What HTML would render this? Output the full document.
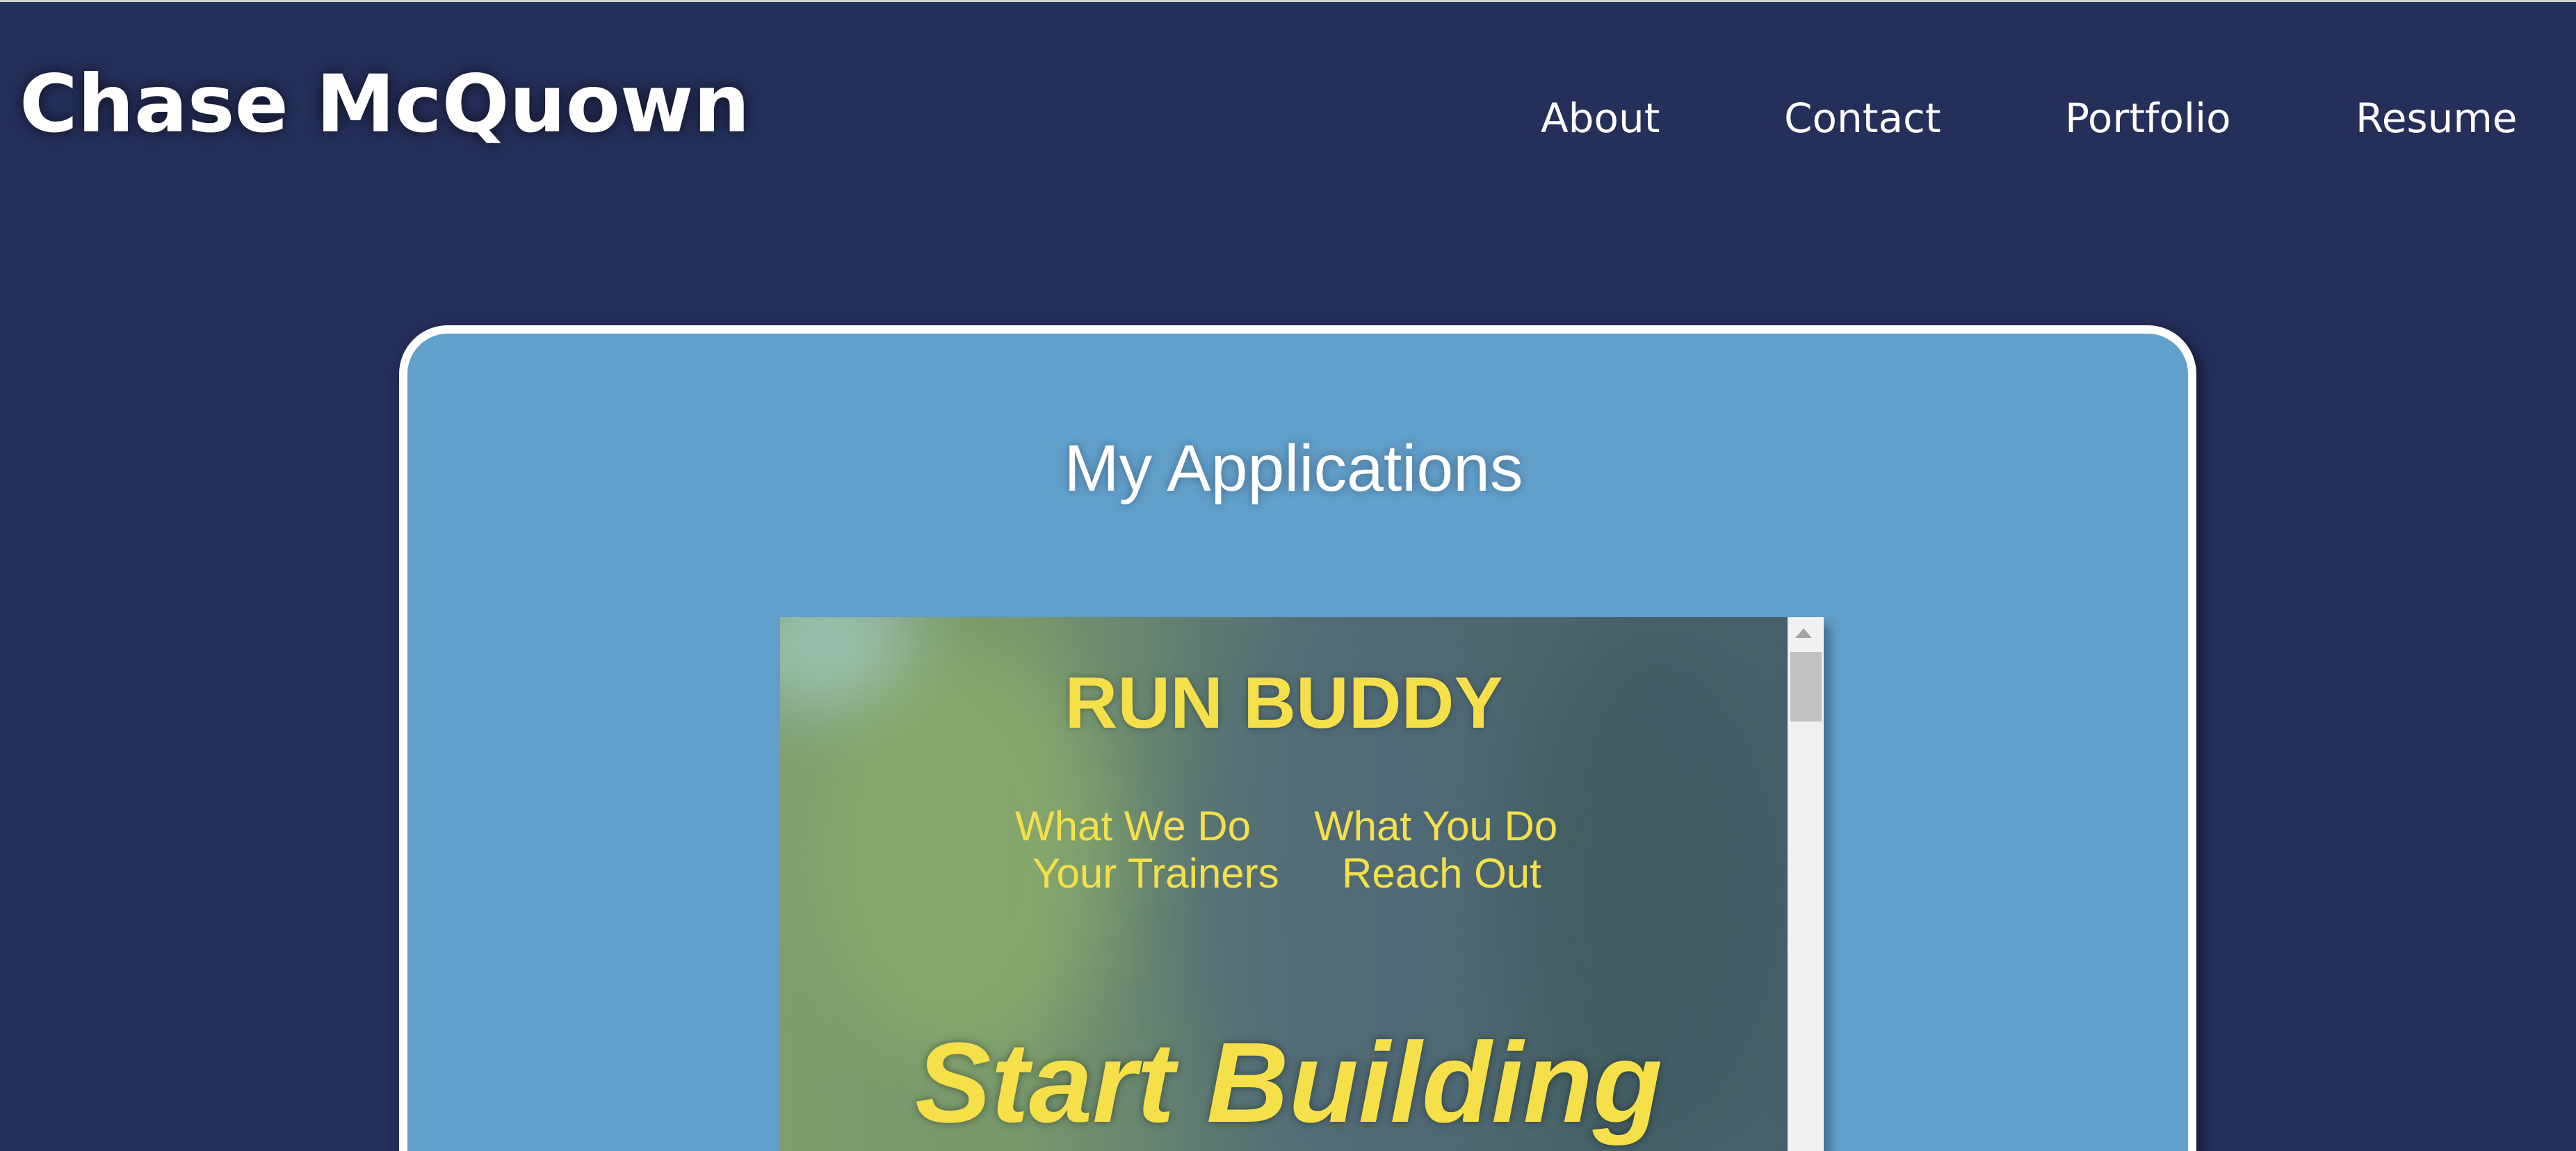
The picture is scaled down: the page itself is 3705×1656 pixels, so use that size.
<!DOCTYPE html>
<html><head><meta charset="utf-8"><style>
html,body{margin:0;padding:0;width:3705px;height:1656px;overflow:hidden;background:#242f5a;}
body{position:relative;border-top:3px solid #d0d0d0;box-sizing:border-box;}
#wrap{position:absolute;left:0;top:0;width:3705px;height:1653px;overflow:hidden;}
.t{position:absolute;white-space:nowrap;line-height:1;}
#name{left:28px;top:80px;font:bold 114px "DejaVu Sans",sans-serif;color:#fff;text-shadow:0 0 20px rgba(0,0,0,.6);}
.nav{top:133px;font:58px "DejaVu Sans",sans-serif;color:#fff;}
#card{position:absolute;left:574px;top:465px;width:2585px;height:1300px;box-sizing:border-box;border:12px solid #fff;border-radius:70px;background:#62a0cc;box-shadow:6px 6px 20px rgba(0,0,0,.5);}
#h{left:8px;width:3705px;text-align:center;top:617px;font:95px "Liberation Sans",sans-serif;color:#fff;text-shadow:0 0 14px rgba(0,0,0,.35);}
#frame{position:absolute;left:1122px;top:885px;width:1501px;height:800px;background:#f1f1f1;box-shadow:10px 10px 14px rgba(0,0,0,.3);overflow:hidden;}
#img{position:absolute;left:0;top:0;width:1449px;height:800px;overflow:hidden;background:linear-gradient(90deg,#7d9e6e 0%,#77966c 25%,#5f7c72 42%,#506b70 60%,#466069 100%);}
.b{position:absolute;border-radius:50%;filter:blur(50px);}
.y{color:#f5e04a;font-family:"Liberation Sans",sans-serif;position:absolute;white-space:nowrap;line-height:1;}
</style></head><body>
<div id="wrap">
<div class="t" id="name">Chase McQuown</div>
<div class="t nav" style="left:2216px">About</div>
<div class="t nav" style="left:2566px">Contact</div>
<div class="t nav" style="left:2970px">Portfolio</div>
<div class="t nav" style="left:3388px">Resume</div>
<div id="card"></div>
<div class="t" id="h">My Applications</div>
<div id="frame">
 <div id="img">
  <div class="b" style="left:-60px;top:-60px;width:260px;height:200px;background:#a3c8c0;opacity:.8"></div>
  <div class="b" style="left:60px;top:40px;width:420px;height:600px;background:#92b66c;opacity:.5"></div>
  <div class="b" style="left:600px;top:-50px;width:450px;height:900px;background:#50697a;opacity:.6"></div>
  <div class="b" style="left:1050px;top:0;width:400px;height:800px;background:#405a62;opacity:.7"></div>
  <div class="y" style="left:0;width:1449px;text-align:center;top:71px;font-weight:bold;font-size:105px;text-shadow:0 0 10px rgba(0,0,0,.3)">RUN BUDDY</div>
  <div class="y" style="left:338px;top:271px;font-size:60px;">What We Do</div>
  <div class="y" style="left:768px;top:271px;font-size:60px;">What You Do</div>
  <div class="y" style="left:363px;top:339px;font-size:60px;">Your Trainers</div>
  <div class="y" style="left:808px;top:339px;font-size:60px;">Reach Out</div>
  <div class="y" style="left:194px;top:588px;font-weight:bold;font-style:italic;font-size:164px;text-shadow:0 0 12px rgba(0,0,0,.4)">Start Building</div>
 </div>
 <div style="position:absolute;left:1460px;top:16px;width:0;height:0;border-left:12px solid transparent;border-right:12px solid transparent;border-bottom:14px solid #a3a3a3"></div>
 <div style="position:absolute;left:1453px;top:50px;width:45px;height:100px;background:#c1c1c1"></div>
</div>
</div>
</body></html>
